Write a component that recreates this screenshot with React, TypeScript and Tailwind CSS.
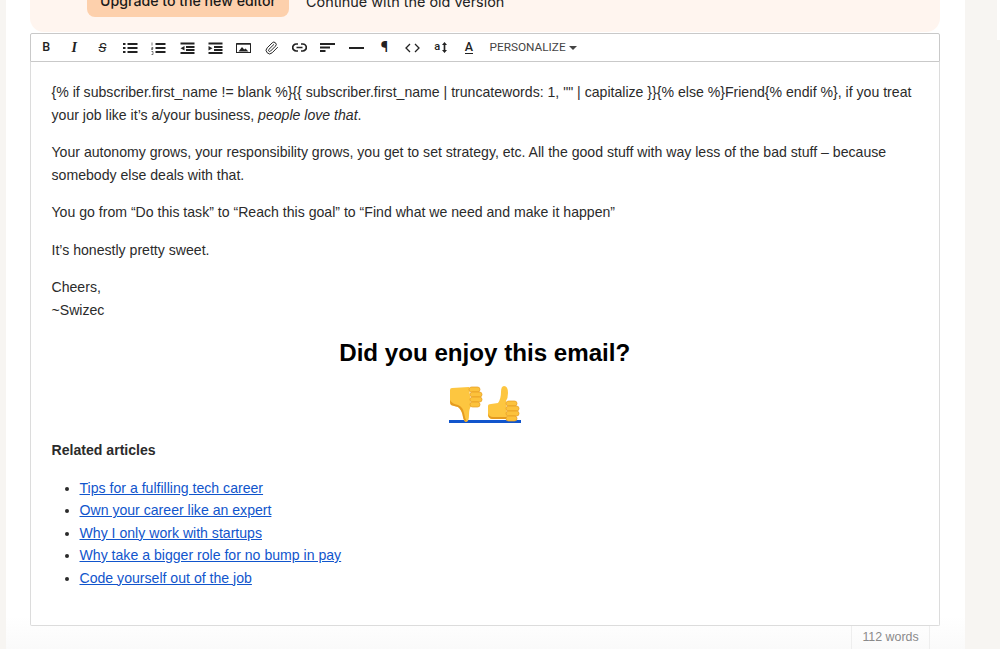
const sans = "font-['Liberation_Sans',Arial,sans-serif]"

function ToolIcon({ children }: { children: React.ReactNode }) {
  return <span className="flex h-full w-[28.2px] shrink-0 items-center justify-center text-[#222]">{children}</span>
}

function Bars({ d, extra }: { d: string; extra?: React.ReactNode }) {
  return (
    <svg width="15" height="14" viewBox="0 0 15 14" fill="none" stroke="currentColor" strokeWidth="1.8">
      <path d={d} />
      {extra}
    </svg>
  )
}

function Toolbar() {
  return (
    <div className="flex h-[29px] items-center rounded-t-[2px] border border-[#c9c9c9] bg-white pl-px">
      <ToolIcon><span className="font-['Roboto',sans-serif] text-[12.500px] font-medium">B</span></ToolIcon>
      <ToolIcon><span className="font-['Liberation_Serif',serif] text-[14px] font-bold italic">I</span></ToolIcon>
      <ToolIcon><span className="font-['Roboto',sans-serif] text-[13.500px] italic line-through">S</span></ToolIcon>
      <ToolIcon>
        <Bars d="M4.500 3h10M4.500 7h10M4.500 11h10" extra={<path d="M0 3h2.500M0 7h2.500M0 11h2.500" strokeWidth="2" />} />
      </ToolIcon>
      <ToolIcon>
        <Bars d="M4.500 3h10M4.500 7h10M4.500 11h10" extra={<path d="M1 1.500v3M0.500 6.500h1.500v1H0.500v1h1.500M0.500 10.500h1.500v3H0.500" strokeWidth="0.6" />} />
      </ToolIcon>
      <ToolIcon>
        <Bars d="M0.500 2.500h14M6 6h8.500M6 9h8.500M0.500 12h14" extra={<path d="M4.500 5v4.500L0.500 7.300z" fill="currentColor" stroke="none" />} />
      </ToolIcon>
      <ToolIcon>
        <Bars d="M0.500 2.500h14M6 6h8.500M6 9h8.500M0.500 12h14" extra={<path d="M0.500 5v4.500l4-2.200z" fill="currentColor" stroke="none" />} />
      </ToolIcon>
      <ToolIcon>
        <svg width="15" height="10" viewBox="0 0 15 10" fill="none">
          <rect x="0.500" y="0.800" width="14" height="8.700" stroke="currentColor" strokeWidth="1" />
          <path d="M0.500 0.800h14" stroke="currentColor" strokeWidth="1.600" />
          <path d="M2.500 8.500 6 4l2.200 2.500 1.300-1 3 3z" fill="currentColor" />
        </svg>
      </ToolIcon>
      <ToolIcon>
        <svg width="14" height="14" viewBox="0 0 24 24" fill="none" stroke="currentColor" strokeWidth="1.700" strokeLinecap="round" strokeLinejoin="round">
          <path d="M21.400 11.050 12.250 20.200a6 6 0 0 1-8.490-8.490l8.570-8.570a4 4 0 1 1 5.660 5.660l-8.580 8.570a2 2 0 0 1-2.830-2.830l8.490-8.480" />
        </svg>
      </ToolIcon>
      <ToolIcon>
        <svg width="15" height="9" viewBox="0 0 15 9" fill="none" stroke="currentColor" strokeWidth="1.700">
          <path d="M6 1H4.200a3.500 3.500 0 0 0 0 7H6M9 1h1.800a3.500 3.500 0 0 1 0 7H9M4.500 4.500h6" />
        </svg>
      </ToolIcon>
      <ToolIcon>
        <svg width="15" height="9" viewBox="0 0 15 9" fill="none" stroke="currentColor" strokeWidth="1.800">
          <path d="M0 1h15M0 4.500h10M0 8h5.500" />
        </svg>
      </ToolIcon>
      <ToolIcon>
        <svg width="15" height="4" viewBox="0 0 15 4" stroke="currentColor" strokeWidth="2"><path d="M0 2h15" /></svg>
      </ToolIcon>
      <ToolIcon><span className="font-['Roboto',sans-serif] text-[15px] font-medium">¶</span></ToolIcon>
      <ToolIcon>
        <svg width="15" height="10" viewBox="0 0 15 10" fill="none" stroke="currentColor" strokeWidth="1.300">
          <path d="M5 1 1 5l4 4M10 1l4 4-4 4" />
        </svg>
      </ToolIcon>
      <ToolIcon>
        <span className="flex items-center gap-[2px]">
          <span className="font-['Roboto',sans-serif] text-[11px] font-medium">a</span>
          <svg width="5" height="13" viewBox="0 0 6 13" fill="currentColor">
            <path d="M3 0 6 3.500H4V9.500h2L3 13 0 9.500h2V3.500H0z" />
          </svg>
        </span>
      </ToolIcon>
      <ToolIcon>
        <span className="border-b-[1.500px] border-[#222] font-['Roboto',sans-serif] text-[12.500px] leading-[12px] font-medium">A</span>
      </ToolIcon>
      <span className="ml-[6.500px] flex items-center gap-[3px] font-['Roboto',sans-serif] text-[11.800px] text-[#444]">
        PERSONALIZE
        <svg width="8" height="4" viewBox="0 0 8 4" fill="currentColor"><path d="M0 0h8L4 4z" /></svg>
      </span>
    </div>
  )
}

const fingers = "#fcc23c"
const crease = "#e59b20"

function ThumbDown() {
  return (
    <svg width="36" height="44" viewBox="0 0 36 44" className="shrink-0">
      <path d="M1 11 Q1 9 3 9 L20 8 L22 27 Q20 30 20 36 Q20 43 17 43 Q15 43 14 38 Q13 31 9 28 Q5 27 2 26 Q1 25 1 23 Z" fill="#fdc640" />
      <path d="M1 21 Q3 25 9 26 Q14 28 15 34 Q16 40 18 43 Q15 43 14 38 Q13 31 9 28 Q5 27 2 26 Q1 25 1 21Z" fill={crease} />
      <rect x="20" y="8" width="11" height="5" rx="2.500" fill={fingers} stroke={crease} strokeWidth="0.700" />
      <rect x="21" y="13" width="12" height="5" rx="2.500" fill={fingers} stroke={crease} strokeWidth="0.700" />
      <rect x="21" y="18" width="12" height="5" rx="2.500" fill={fingers} stroke={crease} strokeWidth="0.700" />
      <rect x="21" y="23" width="10" height="5" rx="2.500" fill={fingers} stroke={crease} strokeWidth="0.700" />
    </svg>
  )
}

function ThumbUp() {
  return (
    <svg width="36" height="44" viewBox="-2 0 36 44" className="shrink-0">
      <path d="M1 27 Q1 25 4 25 L11 24 Q14 20 14 13 Q14 7 17 7 Q21 7 21 14 Q21 19 19 22 L20 40 L6 40 Q1 40 1 36 Z" fill="#fdc640" />
      <path d="M1 34 Q2 38 6 38 L20 38 L20 40 L6 40 Q1 40 1 34Z" fill={crease} />
      <rect x="19" y="22" width="11" height="5" rx="2.500" fill={fingers} stroke={crease} strokeWidth="0.700" />
      <rect x="19" y="27" width="13" height="5" rx="2.500" fill={fingers} stroke={crease} strokeWidth="0.700" />
      <rect x="19" y="32" width="13" height="5" rx="2.500" fill={fingers} stroke={crease} strokeWidth="0.700" />
      <rect x="19" y="37" width="11" height="5" rx="2.500" fill={fingers} stroke={crease} strokeWidth="0.700" />
    </svg>
  )
}

const links = [
  "Tips for a fulfilling tech career",
  "Own your career like an expert",
  "Why I only work with startups",
  "Why take a bigger role for no bump in pay",
  "Code yourself out of the job",
]

export default function App() {
  return (
    <div className={`flex h-[649px] w-[1000px] overflow-hidden bg-[#f7f5f2] text-[#2b2b2b] ${sans}`}>
      <div className="w-[6px] shrink-0" />
      <main className="flex h-full w-[959px] shrink-0 flex-col bg-gradient-to-b from-white from-[95%] to-[#fafafa] pl-[24px] pr-[25px]">
        {/* banner is scrolled mostly off the top */}
        <div className="flex h-[32px] items-end rounded-b-[14px] bg-[#fff5ef] pb-[15px] pl-[57px]">
          <button className="flex h-[28px] w-[202px] items-center justify-center rounded-[8px] bg-[#fdd0ac] pb-[5px] font-['Inter',sans-serif] text-[14.150px] font-medium text-[#1a1a1a]">
            Upgrade to the new editor
          </button>
          <span className="ml-[17px] pb-[4px] font-['Inter',sans-serif] text-[14.400px] text-[#222]">Continue with the old version</span>
        </div>
        <div className="mt-px">
          <Toolbar />
        </div>
        <article className="flex h-[565px] flex-col rounded-b-[2px] border border-t-0 border-[#dcdcdc] bg-white pr-[21px] pl-[20.500px] pt-[19px] text-[14.100px] leading-[22.500px]">
          <p>
            {'{% if subscriber.first_name != blank %}{{ subscriber.first_name | truncatewords: 1, "" | capitalize }}{% else %}Friend{% endif %}'}, if you treat your job like it’s a/your business, <em>people love that</em>.
          </p>
          <p className="mt-[15px]">
            Your autonomy grows, your responsibility grows, you get to set strategy, etc. All the good stuff with way less of the bad stuff – because somebody else deals with that.
          </p>
          <p className="mt-[15px]">You go from “Do this task” to “Reach this goal” to “Find what we need and make it happen”</p>
          <p className="mt-[15px]">It’s honestly pretty sweet.</p>
          <p className="mt-[15px]">
            Cheers,
            <br />
            ~Swizec
          </p>
          <h2 className="mt-[17px] text-center text-[24.150px] leading-[30px] font-bold text-black">Did you enjoy this email?</h2>
          <div className="mt-[11px] flex justify-center">
            <a href="#" className="flex h-[44px] items-start border-b-[3px] border-[#1155cc]">
              <ThumbDown />
              <ThumbUp />
            </a>
          </div>
          <p className="mt-[16px] font-bold">Related articles</p>
          <ul className="mt-[15px] list-disc pl-[28px]">
            {links.map((l) => (
              <li key={l}>
                <a href="#" className="text-[#1155cc] underline">{l}</a>
              </li>
            ))}
          </ul>
        </article>
        <div className="flex justify-end pr-[10px]">
          <span className="flex h-[23px] w-[79px] items-center justify-center border-x border-[#eeeeee] text-[12.400px] text-[#8a8a8a]">112 words</span>
        </div>
      </main>
      <div className="relative flex-1">
        <div className="absolute top-0 right-0 h-[40px] w-[3px] bg-white" />
      </div>
    </div>
  )
}
